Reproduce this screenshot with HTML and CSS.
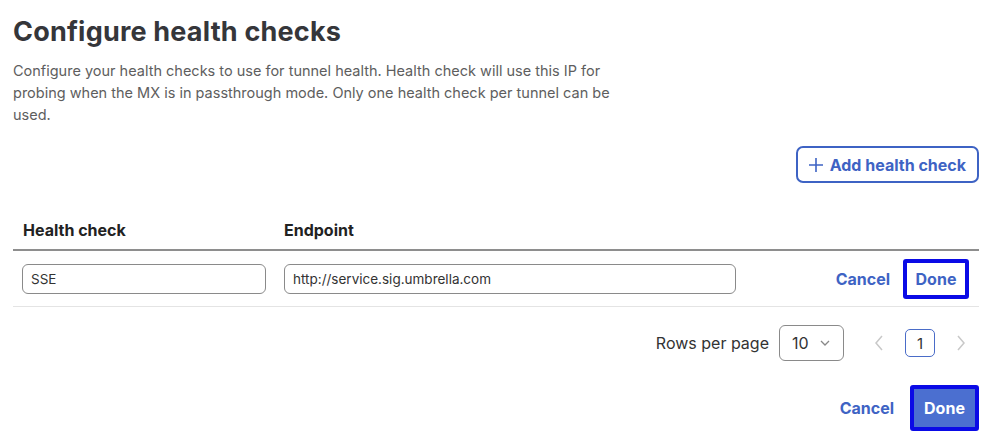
FILE: index.html
```html
<!DOCTYPE html>
<html lang="en">

<head>
    <meta charset="UTF-8" />
    <meta name="viewport" content="width=device-width, initial-scale=1.0" />
    <title>Configure health checks</title>
    <link rel="stylesheet" href="styles.css">
</head>

<body>
    <div class="page">
        <h1 class="title">Configure health checks</h1>
        <p class="desc">Configure your health checks to use for tunnel health. Health check will use this IP for
            probing when the MX is in passthrough mode. Only one health check per tunnel can be used.</p>

        <div class="toolbar">
            <button class="btn-outline">
                <svg width="16" height="16" viewBox="0 0 16 16">
                    <path d="M8 1v14M1 8h14" stroke="currentColor" stroke-width="1.6" fill="none" />
                </svg>
                Add health check
            </button>
        </div>

        <div class="table">
            <div class="row head">
                <div class="cell col-name">Health check</div>
                <div class="cell col-endpoint">Endpoint</div>
                <div class="cell col-actions"></div>
            </div>
            <div class="row">
                <div class="cell col-name"><input class="field name-field" type="text" value="SSE"></div>
                <div class="cell col-endpoint"><input class="field endpoint-field" type="text"
                        value="http://service.sig.umbrella.com"></div>
                <div class="cell col-actions">
                    <button class="link">Cancel</button>
                    <button class="link focused">Done</button>
                </div>
            </div>
        </div>

        <div class="pager">
            <span class="pager-label">Rows per page</span>
            <div class="rows-select">
                <span>10</span>
                <svg width="12" height="8" viewBox="0 0 12 8">
                    <path d="M2 2l4 4 4-4" stroke="#888" stroke-width="1.3" fill="none" />
                </svg>
            </div>
            <div class="pages">
                <svg class="chev" width="12" height="18" viewBox="0 0 12 18">
                    <path d="M9 2L3 9l6 7" stroke="#c8c8c8" stroke-width="1.5" fill="none" />
                </svg>
                <span class="page-num">1</span>
                <svg class="chev" width="12" height="18" viewBox="0 0 12 18">
                    <path d="M3 2l6 7-6 7" stroke="#c8c8c8" stroke-width="1.5" fill="none" />
                </svg>
            </div>
        </div>

        <div class="footer">
            <button class="link">Cancel</button>
            <button class="btn-primary">Done</button>
        </div>
    </div>
</body>

</html>
```

FILE: styles.css
```css
body {
    font-family: Inter, "Noto Sans", sans-serif;
    margin: 0;
    background: white;
    color: #222;
}

.page {
    padding: 12px 19px 0 13px;
}

.title {
    font-size: 27px;
    font-weight: 700;
    color: #35363a;
    margin: 0;
    line-height: 40px;
    letter-spacing: 0.2px;
}

.desc {
    font-size: 14.5px;
    line-height: 22px;
    color: #5e5e5e;
    max-width: 615px;
    margin: 8px 0 0;
}

.toolbar {
    display: flex;
    justify-content: flex-end;
    margin-top: 20px;
}

button {
    font-family: inherit;
    cursor: pointer;
}

.btn-outline {
    display: flex;
    align-items: center;
    gap: 6px;
    height: 37px;
    padding: 0 11px 0 10px;
    background: white;
    border: 2px solid #3e63c4;
    border-radius: 7px;
    color: #3e63c4;
    font-size: 16px;
    font-weight: 700;
}

.table {
    margin-top: 27px;
}

.row {
    display: flex;
    align-items: center;
    height: 55px;
    border-bottom: 1px solid #e4e4e4;
}

.row.head {
    height: 39px;
    border-bottom: 2px solid #8e8e8e;
    font-size: 16px;
    font-weight: 700;
    color: #222;
}

.cell {
    padding-left: 9px;
}

.head .col-name {
    padding-left: 10px;
    width: 252px;
}

.col-name {
    width: 253px;
}

.col-endpoint {
    width: 460px;
}

.col-actions {
    flex: 1;
    display: flex;
    justify-content: flex-end;
    align-items: center;
    gap: 13px;
    padding-right: 10px;
}

.field {
    box-sizing: border-box;
    height: 30px;
    border: 1.5px solid #8a8a8a;
    border-radius: 6px;
    padding: 0 8px;
    font-family: inherit;
    font-size: 13.5px;
    color: #333;
}

.name-field {
    width: 244px;
}

.endpoint-field {
    width: 452px;
}

.link {
    background: none;
    border: none;
    padding: 0;
    color: #3e63c4;
    font-size: 16px;
    font-weight: 700;
}

.link.focused {
    box-sizing: border-box;
    height: 40px;
    width: 66px;
    border: 4px solid #0a0ae6;
    border-radius: 3px;
}

.pager {
    display: flex;
    justify-content: flex-end;
    align-items: center;
    margin-top: 18px;
    padding-right: 12px;
}

.pager-label {
    font-size: 16px;
    color: #333;
    margin-right: 10px;
}

.rows-select {
    box-sizing: border-box;
    display: flex;
    align-items: center;
    justify-content: space-between;
    width: 65px;
    height: 36px;
    padding: 0 12px 0 12px;
    border: 1.5px solid #8a8a8a;
    border-radius: 6px;
    font-size: 16px;
    color: #333;
}

.pages {
    display: flex;
    align-items: center;
    gap: 20px;
    margin-left: 29px;
}

.page-num {
    box-sizing: border-box;
    display: flex;
    align-items: center;
    justify-content: center;
    width: 30px;
    height: 28px;
    border: 1.5px solid #4a6cc8;
    border-radius: 5px;
    font-size: 15px;
    color: #333;
}

.footer {
    display: flex;
    justify-content: flex-end;
    align-items: center;
    gap: 16px;
    margin-top: 24px;
}

.btn-primary {
    box-sizing: border-box;
    width: 69px;
    height: 46px;
    background: #4b6fd0;
    border: 4px solid #0a0ae6;
    border-radius: 3px;
    color: white;
    font-size: 16px;
    font-weight: 700;
}
```
